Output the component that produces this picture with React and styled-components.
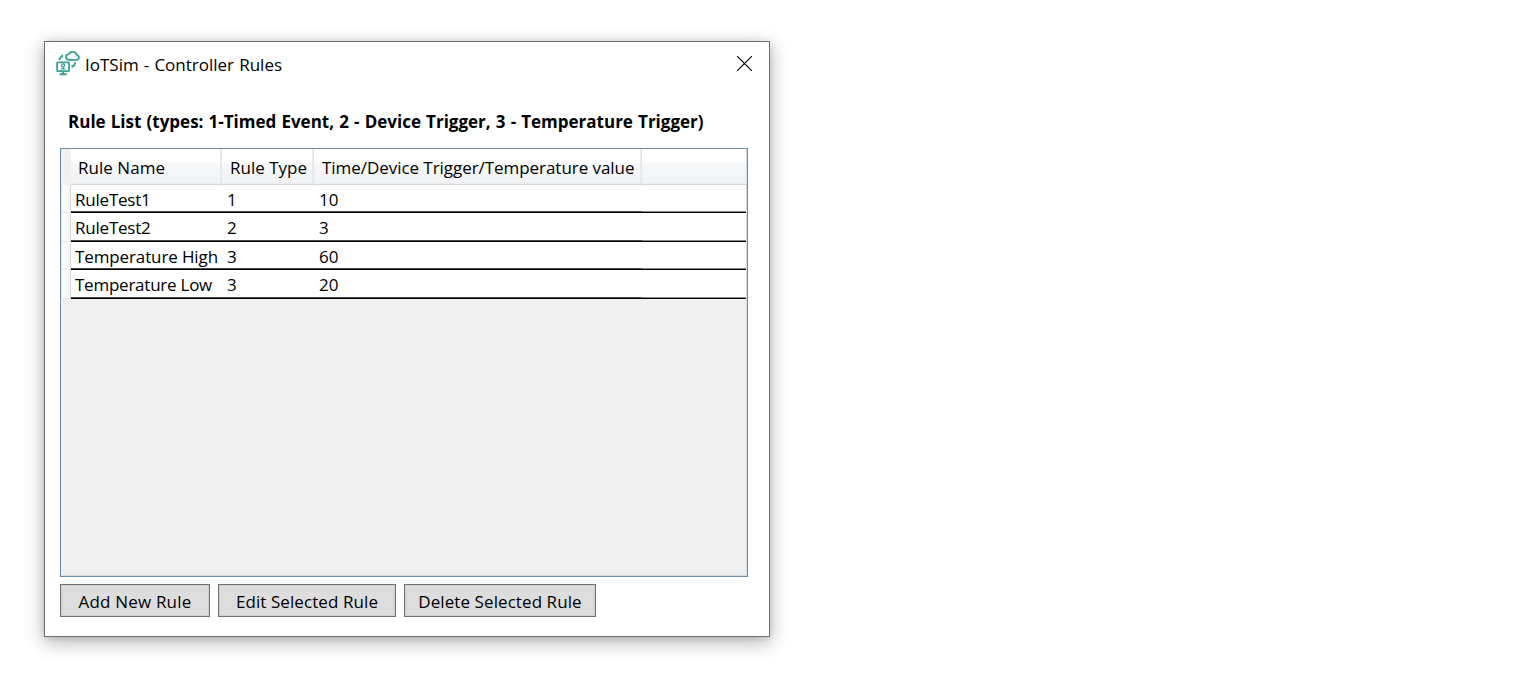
import React from "react";
import styled, { createGlobalStyle } from "styled-components";

const Global = createGlobalStyle`
  * { box-sizing: border-box; }
  body { margin: 0; background: #fff; color: #000; font-family: "Open Sans", "Noto Sans", sans-serif; font-size: 17px; }
`;

const Desktop = styled.main`
  height: 687px;
  padding: 41px 44px;
  overflow: hidden;
`;

const Window = styled.section`
  display: flex;
  flex-direction: column;
  width: 726px;
  height: 596px;
  border: 1px solid #707070;
  background: #fff;
  box-shadow: 0 5px 18px rgba(0, 0, 0, 0.3), 0 1px 6px rgba(0, 0, 0, 0.12);
`;

const TitleBar = styled.header`
  display: flex;
  align-items: flex-start;
  justify-content: space-between;
  height: 44px;
  padding: 9px 17px 0 11px;
`;

const Brand = styled.div`
  display: flex;
  align-items: flex-start;
  gap: 4px;
`;

const Title = styled.div`
  padding-top: 2px;
`;

const Label = styled.span`
  display: block;
  white-space: pre;
  line-height: 24px;
  letter-spacing: ${(p) => p.$track || 0}px;
  word-spacing: ${(p) => p.$gap || 0}px;
`;

const CloseButton = styled.button`
  display: flex;
  padding: 0;
  margin-top: 5px;
  border: 0;
  background: none;
`;

const Content = styled.div`
  padding: 0 21px 0 15px;
`;

const Heading = styled.h1`
  margin: 0;
  padding: 24px 0 14px 8px;
  font-size: 17px;
  font-weight: 700;
`;

const Grid = styled.div`
  width: 688px;
  height: 429px;
  padding-right: 1px;
  border: 1px solid #688caf;
  background: #f0f0f0;
  box-shadow: inset -1px -1px #d3dce5;
`;

const columns = "10px 151px 92px 328px 1fr";

const HeaderRow = styled.div`
  display: grid;
  grid-template-columns: ${columns};
  height: 36px;
`;

const HeaderCell = styled.div`
  display: flex;
  align-items: center;
  padding: 3px 0 0 ${(p) => p.$inset || 7}px;
  border-right: ${(p) => (p.$last ? 0 : 1)}px solid #e2e3e5;
  border-bottom: 1px solid #d4d5d6;
  background: linear-gradient(#fff 0 40%, #f7f8fa 41%, #f1f2f4 100%);
  box-shadow: inset ${(p) => (p.$last ? 0 : -1)}px -1px #ebecee;
`;

const Row = styled.div`
  display: grid;
  grid-template-columns: ${columns};
  height: ${(p) => p.$height}px;
  background: #fff;
`;

const RowHandle = styled.div`
  border-right: 1px solid #d5d5d5;
  border-bottom: 1px solid #e8e8e8;
  border-left: 1px solid #e4e4e4;
  background: linear-gradient(90deg, #fff, #f4f5f7);
`;

const Cell = styled.div`
  padding: 3px 0 0 ${(p) => p.$inset || 4}px;
  border-bottom: 1px solid #000;
  box-shadow: inset 0 -1px ${(p) => (p.$filler ? "#888" : "#484848")};
`;

const Actions = styled.footer`
  display: flex;
  gap: 8px;
  padding-top: 7px;
`;

const ActionButton = styled.button`
  display: flex;
  align-items: center;
  justify-content: center;
  width: ${(p) => p.$width}px;
  height: 33px;
  padding: 2px 0 0;
  border: 1px solid #707070;
  background: #ddd;
  box-shadow: inset 0 0 0 1px #cecece;
  color: #000;
  font: inherit;
`;

const rules = [
  { name: "RuleTest1", type: "1", value: "10", height: 28, track: -0.22 },
  { name: "RuleTest2", type: "2", value: "3", height: 29, track: -0.22 },
  { name: "Temperature High", type: "3", value: "60", height: 28, track: -0.12 },
  { name: "Temperature Low", type: "3", value: "20", height: 29, track: -0.24 },
];

function AppIcon() {
  return (
    <svg width="25" height="25" viewBox="0 0 25 25" fill="none" stroke="#3ba198" strokeWidth="1.8">
      <path d="M12.4 8.8h8a2.2 2.2 0 0 0 .5-4.4 4.4 4.4 0 0 0-8.2-1.2 2.9 2.9 0 0 0-2.6 2.9c0 1.6 1 2.7 2.3 2.7Z" />
      <path d="M3.4 9.2c0-2 1.1-3.5 3.2-4.2M19.2 11.2c0 2.1-1.2 3.5-3.1 4.3" />
      <path d="M6.6 3.6v2.8L4.8 5Z M15.8 14v2.8l2-1.4Z" fill="#3ba198" strokeWidth=".5" />
      <rect x="1.1" y="11.4" width="12" height="8.8" rx=".7" />
      <circle cx="7.1" cy="14.4" r="1.5" strokeWidth="1.3" />
      <path d="M7.1 15.8v2.6M5 17.8h4.2" strokeWidth="1.3" />
      <path d="M7.1 20v3M3.6 23.2h7" strokeWidth="2" />
    </svg>
  );
}

export default function App() {
  return (
    <>
      <Global />
      <Desktop>
        <Window>
          <TitleBar>
            <Brand>
              <AppIcon />
              <Title><Label $gap={0.7}>IoTSim - Controller Rules</Label></Title>
            </Brand>
            <CloseButton aria-label="Close">
              <svg width="15" height="15" viewBox="0 0 15 15" stroke="#000" strokeWidth="1.1">
                <path d="M0 0 15 15M15 0 0 15" />
              </svg>
            </CloseButton>
          </TitleBar>
          <Content>
            <Heading>
              <Label $gap={0.72}>Rule List (types: 1-Timed Event, 2 - Device Trigger, 3 - Temperature Trigger)</Label>
            </Heading>
            <Grid>
              <HeaderRow>
                <span />
                <HeaderCell><Label $track={0.04}>Rule Name</Label></HeaderCell>
                <HeaderCell $inset={8}><Label>Rule Type</Label></HeaderCell>
                <HeaderCell $inset={8}><Label $track={-0.05}>Time/Device Trigger/Temperature value</Label></HeaderCell>
                <HeaderCell $last />
              </HeaderRow>
              {rules.map((rule) => (
                <Row key={rule.name} $height={rule.height}>
                  <RowHandle />
                  <Cell><Label $track={rule.track}>{rule.name}</Label></Cell>
                  <Cell $inset={5}><Label>{rule.type}</Label></Cell>
                  <Cell $inset={5}><Label>{rule.value}</Label></Cell>
                  <Cell $filler />
                </Row>
              ))}
            </Grid>
            <Actions>
              <ActionButton $width={150}><Label $track={0.18}>Add New Rule</Label></ActionButton>
              <ActionButton $width={178}><Label $track={0.08}>Edit Selected Rule</Label></ActionButton>
              <ActionButton $width={192}><Label $track={0.08}>Delete Selected Rule</Label></ActionButton>
            </Actions>
          </Content>
        </Window>
      </Desktop>
    </>
  );
}
